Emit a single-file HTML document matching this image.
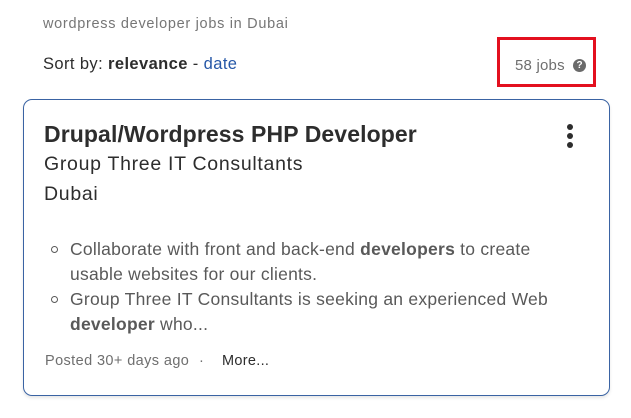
<!DOCTYPE html>
<html><head><meta charset="utf-8"><style>
*{margin:0;padding:0;box-sizing:border-box}
body{width:631px;height:418px;background:#fff;font-family:"Liberation Sans",Arial,sans-serif;position:relative;overflow:hidden}
.a{position:absolute;white-space:nowrap}
</style></head><body>
<div class="a" style="left:43px;top:16px;font-size:14.5px;color:#767676;letter-spacing:0.7px">wordpress developer jobs in Dubai</div>
<div class="a" style="left:43px;top:55px;font-size:16.5px;color:#2d2d2d;letter-spacing:0.4px">Sort by: <b>relevance</b> - <span style="color:#2557a7">date</span></div>
<div class="a" style="left:497px;top:37px;width:99px;height:50px;border:3px solid #e3101f"></div>
<div class="a" style="left:515px;top:57px;font-size:15px;color:#6f6f6f;letter-spacing:0.2px">58 jobs</div>
<div class="a" style="left:573px;top:59px;width:13px;height:13px;border-radius:50%;background:#6a6a6a;color:#fff;font-size:10px;font-weight:bold;text-align:center;line-height:13px">?</div>
<div class="a" style="left:23px;top:99px;width:587px;height:297px;border:1px solid #3a63a3;border-radius:9px;box-shadow:0 2px 3px rgba(0,0,0,.1)"></div>
<div class="a" style="left:44px;top:121px;font-size:23px;font-weight:bold;color:#2d2d2d;letter-spacing:0.1px">Drupal/Wordpress PHP Developer</div>
<div class="a" style="left:567px;top:124px;width:6px;height:6px;border-radius:50%;background:#2d2d2d"></div>
<div class="a" style="left:567px;top:133px;width:6px;height:6px;border-radius:50%;background:#2d2d2d"></div>
<div class="a" style="left:567px;top:142px;width:6px;height:6px;border-radius:50%;background:#2d2d2d"></div>
<div class="a" style="left:44px;top:153px;font-size:19.5px;color:#2d2d2d;letter-spacing:0.7px">Group Three IT Consultants</div>
<div class="a" style="left:44px;top:183px;font-size:19.5px;color:#2d2d2d;letter-spacing:0.7px">Dubai</div>
<div style="position:absolute;left:70px;top:237px;font-size:17.5px;color:#595959;line-height:25px;white-space:nowrap;letter-spacing:0.25px">
Collaborate with front and back-end <b>developers</b> to create<br>usable websites for our clients.<br>Group Three IT Consultants is seeking an experienced Web<br><b>developer</b> who...</div>
<div class="a" style="left:51px;top:246px;width:7px;height:7px;border:1.3px solid #595959;border-radius:50%"></div>
<div class="a" style="left:51px;top:296px;width:7px;height:7px;border:1.3px solid #595959;border-radius:50%"></div>
<div class="a" style="left:45px;top:353px;font-size:14.5px;color:#6f6f6f;letter-spacing:0.4px">Posted 30+ days ago</div>
<div class="a" style="left:199px;top:353px;font-size:14.5px;color:#6f6f6f">·</div>
<div class="a" style="left:222px;top:353px;font-size:14.5px;color:#2d2d2d;letter-spacing:0.3px">More...</div>
</body></html>
